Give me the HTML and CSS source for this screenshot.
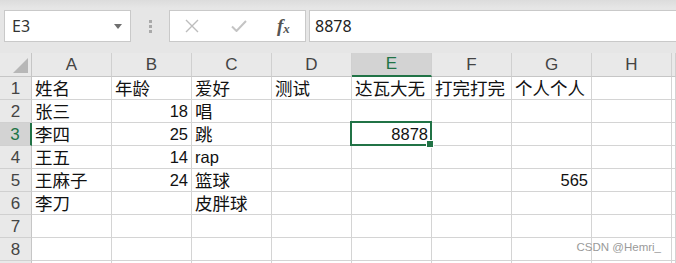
FILE: index.html
```html
<!DOCTYPE html>
<html lang="zh-CN">
<head>
    <meta charset="UTF-8" />
    <title>Sheet1</title>
    <link rel="stylesheet" href="styles.css">
</head>
<body>
<div class="formula-bar">
    <div class="name-box">
        <span>E3</span>
        <svg class="drop" width="8" height="5" viewBox="0 0 8 5"><path d="M0 0h8L4 5z" fill="#6f6f6f"/></svg>
    </div>
    <div class="grip"><i></i><i></i><i></i></div>
    <div class="fx-buttons">
        <svg width="14" height="14" viewBox="0 0 14 14"><path d="M1 1L13 13M13 1L1 13" stroke="#bdbdbd" stroke-width="1.4" fill="none"/></svg>
        <svg width="16" height="12" viewBox="0 0 16 12"><path d="M1 6.5L5.5 11L15 1" stroke="#c4c4c4" stroke-width="2" fill="none"/></svg>
        <span class="fx">f<sub>x</sub></span>
    </div>
    <div class="formula-input">8878</div>
</div>

<div class="sheet">
    <div class="corner"><span class="tri"></span></div>
    <div class="col-head">A</div>
    <div class="col-head">B</div>
    <div class="col-head">C</div>
    <div class="col-head">D</div>
    <div class="col-head active">E</div>
    <div class="col-head">F</div>
    <div class="col-head">G</div>
    <div class="col-head">H</div>
    <div class="col-head"></div>

    <div class="row-head">1</div>
    <div class="cell">姓名</div>
    <div class="cell">年龄</div>
    <div class="cell">爱好</div>
    <div class="cell">测试</div>
    <div class="cell">达瓦大无</div>
    <div class="cell">打完打完</div>
    <div class="cell">个人个人</div>
    <div class="cell"></div>
    <div class="cell"></div>

    <div class="row-head">2</div>
    <div class="cell">张三</div>
    <div class="cell num">18</div>
    <div class="cell">唱</div>
    <div class="cell"></div>
    <div class="cell"></div>
    <div class="cell"></div>
    <div class="cell"></div>
    <div class="cell"></div>
    <div class="cell"></div>

    <div class="row-head active">3</div>
    <div class="cell">李四</div>
    <div class="cell num">25</div>
    <div class="cell">跳</div>
    <div class="cell"></div>
    <div class="cell num selected">8878</div>
    <div class="cell"></div>
    <div class="cell"></div>
    <div class="cell"></div>
    <div class="cell"></div>

    <div class="row-head">4</div>
    <div class="cell">王五</div>
    <div class="cell num">14</div>
    <div class="cell latin">rap</div>
    <div class="cell"></div>
    <div class="cell"></div>
    <div class="cell"></div>
    <div class="cell"></div>
    <div class="cell"></div>
    <div class="cell"></div>

    <div class="row-head">5</div>
    <div class="cell">王麻子</div>
    <div class="cell num">24</div>
    <div class="cell">篮球</div>
    <div class="cell"></div>
    <div class="cell"></div>
    <div class="cell"></div>
    <div class="cell num">565</div>
    <div class="cell"></div>
    <div class="cell"></div>

    <div class="row-head">6</div>
    <div class="cell">李刀</div>
    <div class="cell"></div>
    <div class="cell">皮胖球</div>
    <div class="cell"></div>
    <div class="cell"></div>
    <div class="cell"></div>
    <div class="cell"></div>
    <div class="cell"></div>
    <div class="cell"></div>

    <div class="row-head">7</div>
    <div class="cell"></div>
    <div class="cell"></div>
    <div class="cell"></div>
    <div class="cell"></div>
    <div class="cell"></div>
    <div class="cell"></div>
    <div class="cell"></div>
    <div class="cell"></div>
    <div class="cell"></div>

    <div class="row-head">8</div>
    <div class="cell"></div>
    <div class="cell"></div>
    <div class="cell"></div>
    <div class="cell"></div>
    <div class="cell"></div>
    <div class="cell"></div>
    <div class="cell"></div>
    <div class="cell"></div>
    <div class="cell"></div>

    <div class="row-head"></div>
    <div class="cell"></div>
    <div class="cell"></div>
    <div class="cell"></div>
    <div class="cell"></div>
    <div class="cell"></div>
    <div class="cell"></div>
    <div class="cell"></div>
    <div class="cell"></div>
    <div class="cell"></div>

    <div class="watermark">CSDN @Hemri_</div>
</div>
</body>
</html>
```

FILE: styles.css
```css
* {
    box-sizing: border-box;
}
body {
    margin: 0;
    width: 676px;
    height: 263px;
    overflow: hidden;
    background: #fff;
    font-family: "Liberation Sans", "Noto Sans CJK SC", sans-serif;
}
.formula-bar {
    height: 53px;
    background: linear-gradient(#dcdcdc, #e6e6e6 8px, #e6e6e6);
    display: flex;
    align-items: flex-start;
    padding: 10px 0 0 4px;
}
.name-box {
    width: 127px;
    height: 32px;
    background: #fff;
    border: 1px solid #c9c9c9;
    display: flex;
    align-items: center;
    justify-content: space-between;
    padding: 0 8px 0 7px;
    font-family: "Noto Sans", sans-serif;
    font-size: 16px;
    color: #333;
}
.grip {
    width: 38px;
    height: 32px;
    display: flex;
    flex-direction: column;
    align-items: center;
    justify-content: center;
    gap: 2px;
}
.grip i {
    width: 3px;
    height: 3px;
    background: #a9a9a9;
}
.fx-buttons {
    width: 137px;
    height: 32px;
    background: #fff;
    border: 1px solid #c9c9c9;
    display: flex;
    align-items: center;
    padding: 0 0 0 15px;
    gap: 32px;
}
.fx {
    font-family: "Liberation Serif", serif;
    font-style: italic;
    font-weight: bold;
    font-size: 19px;
    color: #555;
    margin-left: -2px;
}
.fx sub {
    font-size: 13px;
    vertical-align: -1px;
}
.formula-input {
    flex: 1;
    height: 32px;
    margin-left: 3px;
    background: #fff;
    border: 1px solid #c9c9c9;
    border-right: none;
    display: flex;
    align-items: center;
    padding-left: 5px;
    font-family: "Noto Sans", sans-serif;
    font-size: 16px;
    color: #222;
}
.sheet {
    position: relative;
    height: 210px;
    overflow: hidden;
    display: grid;
    grid-template-columns: 32px repeat(8, 80px) 1fr;
    grid-template-rows: 24px;
    grid-auto-rows: 23px;
}
.corner,
.col-head,
.row-head {
    background: #e9e9e9;
    border-right: 1px solid #c6c6c6;
    border-bottom: 1px solid #c6c6c6;
    color: #444;
    font-size: 17px;
    display: flex;
    align-items: center;
    justify-content: center;
}
.corner {
    position: relative;
}
.tri {
    position: absolute;
    right: 3px;
    bottom: 3px;
    width: 0;
    height: 0;
    border-left: 15px solid transparent;
    border-bottom: 15px solid #b7b7b7;
}
.col-head {
    border-right-color: #d0d0d0;
}
.col-head.active {
    background: #d3d3d3;
    border-bottom: 2px solid #217346;
    color: #217346;
}
.row-head {
    border-bottom-color: #d0d0d0;
    font-size: 17px;
    padding-top: 1px;
}
.row-head.active {
    background: #d3d3d3;
    border-right: 2px solid #217346;
    color: #217346;
}
.cell {
    border-right: 1px solid #d4d4d4;
    border-bottom: 1px solid #d4d4d4;
    font-family: "Noto Sans CJK SC", sans-serif;
    font-size: 17.5px;
    line-height: 22px;
    color: #111;
    padding: 0 0 0 3px;
    white-space: nowrap;
    display: flex;
    align-items: flex-end;
}
.cell.num,
.cell.latin {
    font-family: "Liberation Sans", sans-serif;
    font-size: 16.5px;
    line-height: 21px;
}
.cell.num {
    justify-content: flex-end;
    padding: 0 3px 0 0;
}
.cell.selected {
    position: relative;
}
.cell.selected::after {
    content: "";
    position: absolute;
    left: -2px;
    top: -2px;
    right: -1px;
    bottom: -1px;
    border: 2px solid #217346;
}
.cell.selected::before {
    content: "";
    position: absolute;
    right: -3px;
    bottom: -3px;
    width: 6px;
    height: 6px;
    background: #217346;
    border: 1px solid #fff;
    z-index: 1;
}
.watermark {
    position: absolute;
    right: 15px;
    bottom: 10px;
    font-family: "Liberation Sans", sans-serif;
    font-size: 11.5px;
    color: #9a9a9a;
}
```
